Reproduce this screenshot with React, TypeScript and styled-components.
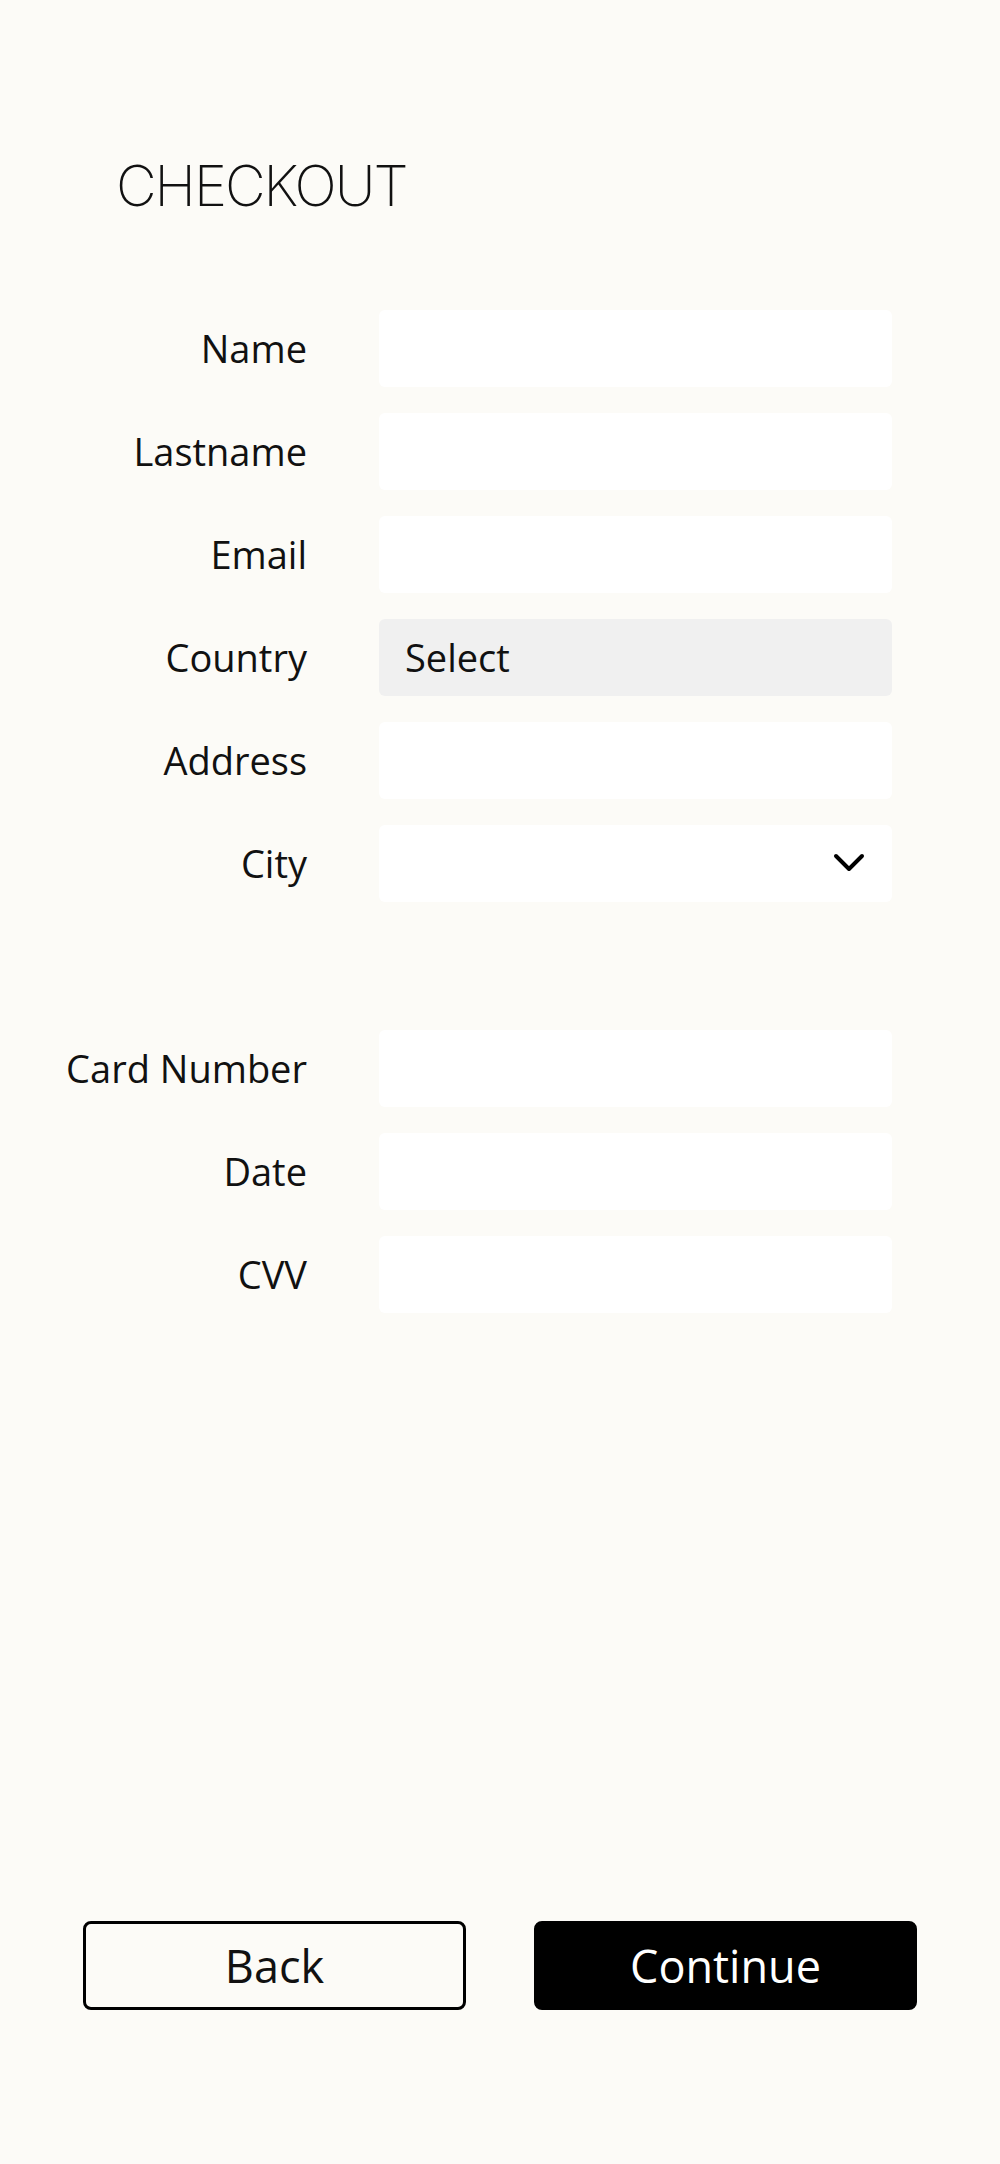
import styled, { createGlobalStyle } from "styled-components"

const GlobalStyle = createGlobalStyle`
  * { box-sizing: border-box; }
  html, body {
    margin: 0;
    padding: 0;
    background: #fcfbf7;
  }
  body {
    font-family: "Open Sans", "Noto Sans", sans-serif;
    color: #111;
  }
`

const shipping = ["Name", "Lastname", "Email"]
const payment = ["Card Number", "Date", "CVV"]

export default function App() {
  return (
    <>
      <GlobalStyle />
      <Page>
        <Title>CHECKOUT</Title>
        <Form $top={89}>
          {shipping.map(label => (
            <Row key={label}>
              <Label>{label}</Label>
              <Input />
            </Row>
          ))}
          <Row>
            <Label>Country</Label>
            <SelectBox>Select</SelectBox>
          </Row>
          <Row>
            <Label>Address</Label>
            <Input />
          </Row>
          <Row>
            <Label>City</Label>
            <Dropdown>
              <svg width="32" height="20" viewBox="0 0 32 20" fill="none">
                <polyline points="3,3 16,16 29,3" stroke="#000" strokeWidth="4" strokeLinecap="round" strokeLinejoin="round" />
              </svg>
            </Dropdown>
          </Row>
        </Form>
        <Form $top={128}>
          {payment.map(label => (
            <Row key={label}>
              <Label>{label}</Label>
              <Input />
            </Row>
          ))}
        </Form>
        <Actions>
          <Button>Back</Button>
          <Button $primary>Continue</Button>
        </Actions>
      </Page>
    </>
  )
}

const Page = styled.div`
  width: 1000px;
  height: 2164px;
  display: flex;
  flex-direction: column;
  padding-top: 153px;
`
const Title = styled.h1`
  margin: 0 0 0 116px;
  font-family: Inter, "Liberation Sans", sans-serif;
  font-weight: 200;
  font-size: 56px;
  line-height: 1.21;
  letter-spacing: -2px;
  color: #111;
`
const Form = styled.div<{ $top: number }>`
  display: flex;
  flex-direction: column;
  gap: 26px;
  margin-top: ${props => props.$top}px;
`
const Row = styled.div`
  display: grid;
  grid-template-columns: 307px 513px;
  column-gap: 72px;
  align-items: center;
  height: 77px;
`
const Label = styled.label`
  text-align: right;
  font-size: 38px;
  line-height: 1;
  color: #111;
`
const Input = styled.input`
  height: 77px;
  width: 513px;
  border: none;
  border-radius: 6px;
  background: #fff;
  outline: none;
`
const SelectBox = styled.div`
  height: 77px;
  border-radius: 6px;
  background: #f0f0f0;
  display: flex;
  align-items: center;
  padding-left: 26px;
  font-size: 38px;
  color: #111;
`
const Dropdown = styled.div`
  height: 77px;
  border-radius: 6px;
  background: #fff;
  display: flex;
  align-items: center;
  justify-content: flex-end;
  padding-right: 27px;
`
const Actions = styled.div`
  margin-top: auto;
  margin-bottom: 154px;
  display: flex;
  gap: 68px;
  padding-left: 83px;
`
const Button = styled.button<{ $primary?: boolean }>`
  width: 383px;
  height: 89px;
  border: 3px solid #000;
  border-radius: 8px;
  background: ${props => props.$primary ? "#000" : "transparent"};
  color: ${props => props.$primary ? "#fff" : "#111"};
  font-family: "Open Sans", "Noto Sans", sans-serif;
  font-size: 45px;
  cursor: pointer;
`
